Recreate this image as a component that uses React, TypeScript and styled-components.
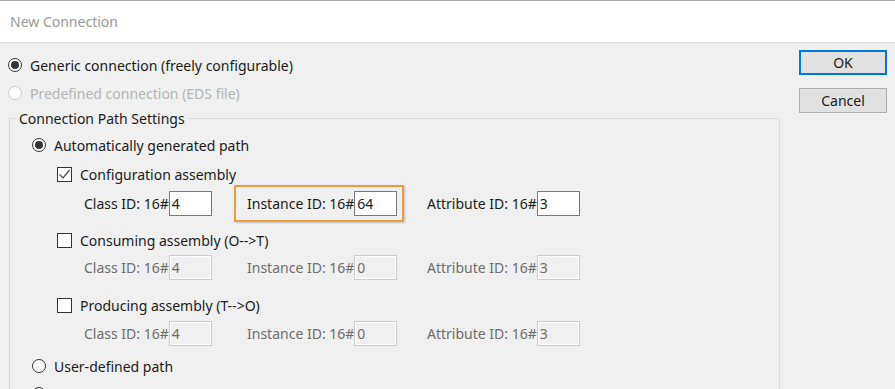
import styled, { createGlobalStyle } from "styled-components";

const GlobalStyle = createGlobalStyle`
  html, body {
    margin: 0;
    padding: 0;
    background: #f0f0f0;
  }
  body {
    font-family: "Noto Sans", "Open Sans", Arial, sans-serif;
    font-size: 14px;
    color: #1a1a1a;
  }
`;

const Window = styled.div`
  width: 895px;
  height: 389px;
  overflow: hidden;
  background: #f0f0f0;
  border-top: 1px solid #a9a9a9;
  box-sizing: border-box;
  display: flex;
  flex-direction: column;
`;

const TitleBar = styled.div`
  height: 41px;
  flex-shrink: 0;
  background: #ffffff;
  border-bottom: 1px solid #dcdcdc;
  display: flex;
  align-items: center;
  padding-left: 10px;
  font-size: 14px;
  color: #9a9a9a;
`;

const Body = styled.div`
  flex: 1;
  display: flex;
  min-height: 0;
`;

const Main = styled.div`
  flex: 1;
  padding: 13px 0 0 8px;
  display: flex;
  flex-direction: column;
`;

const Side = styled.div`
  width: 88px;
  margin: 7px 8px 0 18px;
  display: flex;
  flex-direction: column;
  gap: 13px;
`;

const Button = styled.button<{ $default?: boolean }>`
  height: 25px;
  box-sizing: border-box;
  font-family: inherit;
  font-size: 14px;
  color: #1a1a1a;
  background: #e1e1e1;
  border: ${(p) => (p.$default ? "2px solid #0078d7" : "1px solid #adadad")};
  padding: 0;
  line-height: 1;
`;

const OptionRow = styled.label<{ $mt?: number; $disabled?: boolean }>`
  display: flex;
  align-items: center;
  gap: 8px;
  height: 18px;
  margin-top: ${(p) => p.$mt ?? 0}px;
  color: ${(p) => (p.$disabled ? "#b4b4b4" : "#1a1a1a")};
  white-space: nowrap;
`;

const Radio = styled.span<{ $checked?: boolean; $disabled?: boolean }>`
  width: 14px;
  height: 14px;
  box-sizing: border-box;
  border-radius: 50%;
  border: 1px solid ${(p) => (p.$disabled ? "#cccccc" : "#333333")};
  background: #ffffff;
  display: flex;
  align-items: center;
  justify-content: center;
  flex-shrink: 0;
  &::after {
    content: "";
    display: ${(p) => (p.$checked ? "block" : "none")};
    width: 8px;
    height: 8px;
    border-radius: 50%;
    background: #333333;
  }
`;

const Box = styled.span`
  width: 15px;
  height: 15px;
  box-sizing: border-box;
  border: 1px solid #333333;
  background: #ffffff;
  flex-shrink: 0;
  display: flex;
  align-items: center;
  justify-content: center;
`;

const Group = styled.fieldset`
  margin: 7px 0 0 1px;
  width: 771px;
  height: 300px;
  box-sizing: border-box;
  border: 1px solid #dcdcdc;
  padding: 0;
  min-width: 0;
`;

const Legend = styled.legend`
  padding: 0 2px;
  margin-left: 7px;
  color: #1a1a1a;
  font-size: 14px;
`;

const GroupContent = styled.div`
  padding: 8px 0 0 22px;
  display: flex;
  flex-direction: column;
`;

const Nested = styled.div`
  padding-left: 25px;
  display: flex;
  flex-direction: column;
`;

const FieldRow = styled.div<{ $mt: number; $disabled?: boolean }>`
  display: grid;
  grid-template-columns: 163px 180px auto;
  align-items: center;
  justify-items: start;
  margin-top: ${(p) => p.$mt}px;
  padding-left: 27px;
  color: ${(p) => (p.$disabled ? "#6d6d6d" : "#1a1a1a")};
`;

const Field = styled.div`
  position: relative;
  display: flex;
  align-items: center;
  white-space: nowrap;
`;

const Input = styled.div<{ $disabled?: boolean }>`
  width: 43px;
  height: 25px;
  box-sizing: border-box;
  border: 1px solid ${(p) => (p.$disabled ? "#cccccc" : "#7a7a7a")};
  box-shadow: ${(p) => (p.$disabled ? "inset 0 0 0 1px #ffffff" : "none")};
  background: ${(p) => (p.$disabled ? "#f0f0f0" : "#ffffff")};
  color: ${(p) => (p.$disabled ? "#6d6d6d" : "#1a1a1a")};
  display: flex;
  align-items: center;
  padding-left: 2px;
`;

const Highlight = styled.span`
  position: absolute;
  top: -6px;
  bottom: -6px;
  left: -13px;
  right: -7px;
  border: 2px solid #f39a3d;
  box-shadow: 1px 1px 2px rgba(0, 0, 0, 0.2);
  pointer-events: none;
`;

const Check = () => (
  <svg width="13" height="13" viewBox="0 0 13 13">
    <path d="M1.5 6.5 L5 10 L11.5 2" fill="none" stroke="#555" strokeWidth="1.4" />
  </svg>
);

type Ids = { cls: string; inst: string; attr: string };

function Fields({ ids, mt, disabled, mark }: { ids: Ids; mt: number; disabled?: boolean; mark?: boolean }) {
  return (
    <FieldRow $mt={mt} $disabled={disabled}>
      <Field>
        Class ID: 16#<Input $disabled={disabled}>{ids.cls}</Input>
      </Field>
      <Field>
        Instance ID: 16#<Input $disabled={disabled}>{ids.inst}</Input>
        {mark && <Highlight />}
      </Field>
      <Field>
        Attribute ID: 16#<Input $disabled={disabled}>{ids.attr}</Input>
      </Field>
    </FieldRow>
  );
}

export default function App() {
  return (
    <>
      <GlobalStyle />
      <Window>
        <TitleBar>New Connection</TitleBar>
        <Body>
          <Main>
            <OptionRow>
              <Radio $checked />
              Generic connection (freely configurable)
            </OptionRow>
            <OptionRow $mt={10} $disabled>
              <Radio $disabled />
              Predefined connection (EDS file)
            </OptionRow>
            <Group>
              <Legend>Connection Path Settings</Legend>
              <GroupContent>
                <OptionRow>
                  <Radio $checked />
                  Automatically generated path
                </OptionRow>
                <Nested>
                  <OptionRow $mt={11}>
                    <Box>
                      <Check />
                    </Box>
                    Configuration assembly
                  </OptionRow>
                  <Fields ids={{ cls: "4", inst: "64", attr: "3" }} mt={8} mark />
                  <OptionRow $mt={15}>
                    <Box />
                    Consuming assembly (O--&gt;T)
                  </OptionRow>
                  <Fields ids={{ cls: "4", inst: "0", attr: "3" }} mt={6} disabled />
                  <OptionRow $mt={16}>
                    <Box />
                    Producing assembly (T--&gt;O)
                  </OptionRow>
                  <Fields ids={{ cls: "4", inst: "0", attr: "3" }} mt={7} disabled />
                </Nested>
                <OptionRow $mt={11}>
                  <Radio />
                  User-defined path
                </OptionRow>
                <OptionRow $mt={10}>
                  <Radio />
                  Path defined by symbol
                </OptionRow>
              </GroupContent>
            </Group>
          </Main>
          <Side>
            <Button $default>OK</Button>
            <Button>Cancel</Button>
          </Side>
        </Body>
      </Window>
    </>
  );
}
